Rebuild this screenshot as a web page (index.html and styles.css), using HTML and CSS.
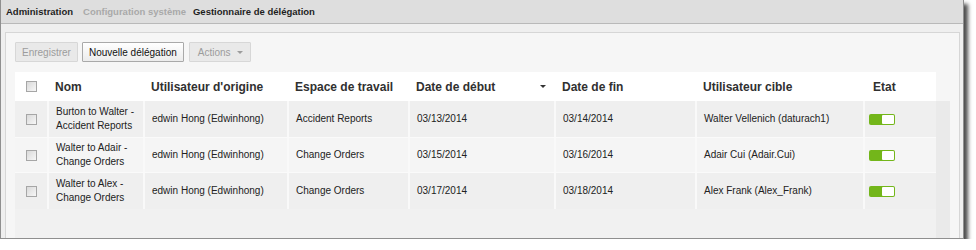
FILE: index.html
```html
<!DOCTYPE html>
<html lang="fr">
<head>
<meta charset="utf-8">
<title>Gestionnaire de délégation</title>
<link rel="stylesheet" href="styles.css">
</head>
<body>
<div class="frame">
  <div class="crumbs">
    <span class="crumb first">Administration</span>
    <span class="crumb muted">Configuration système</span>
    <span class="crumb">Gestionnaire de délégation</span>
  </div>
  <div class="main">
    <div class="panel">
      <div class="toolbar">
        <button class="btn disabled">Enregistrer</button>
        <button class="btn">Nouvelle délégation</button>
        <button class="btn disabled actions">Actions <span class="caret"></span></button>
      </div>
      <div class="tablewrap">
        <div class="table">
          <div class="row head">
            <div class="cell chk"><span class="cb"></span></div>
            <div class="cell">Nom</div>
            <div class="cell">Utilisateur d'origine</div>
            <div class="cell">Espace de travail</div>
            <div class="cell sorted">Date de début <span class="sort"></span></div>
            <div class="cell">Date de fin</div>
            <div class="cell">Utilisateur cible</div>
            <div class="cell etat">Etat</div>
          </div>
          <div class="body">
            <div class="row odd">
              <div class="cell chk"><span class="cb"></span></div>
              <div class="cell name">Burton to Walter - Accident Reports</div>
              <div class="cell">edwin Hong (Edwinhong)</div>
              <div class="cell">Accident Reports</div>
              <div class="cell">03/13/2014</div>
              <div class="cell">03/14/2014</div>
              <div class="cell">Walter Vellenich (daturach1)</div>
              <div class="cell"><span class="toggle"><span class="knob"></span></span></div>
            </div>
            <div class="row even">
              <div class="cell chk"><span class="cb"></span></div>
              <div class="cell name">Walter to Adair - Change Orders</div>
              <div class="cell">edwin Hong (Edwinhong)</div>
              <div class="cell">Change Orders</div>
              <div class="cell">03/15/2014</div>
              <div class="cell">03/16/2014</div>
              <div class="cell">Adair Cui (Adair.Cui)</div>
              <div class="cell"><span class="toggle"><span class="knob"></span></span></div>
            </div>
            <div class="row odd">
              <div class="cell chk"><span class="cb"></span></div>
              <div class="cell name">Walter to Alex - Change Orders</div>
              <div class="cell">edwin Hong (Edwinhong)</div>
              <div class="cell">Change Orders</div>
              <div class="cell">03/17/2014</div>
              <div class="cell">03/18/2014</div>
              <div class="cell">Alex Frank (Alex_Frank)</div>
              <div class="cell"><span class="toggle"><span class="knob"></span></span></div>
            </div>
          </div>
        </div>
        <div class="strip"></div>
      </div>
    </div>
  </div>
</div>
</body>
</html>
```
FILE: styles.css
```css
html, body {
  margin: 0;
  padding: 0;
  background: #ffffff;
}

body {
  font-family: "Liberation Sans", Arial, sans-serif;
  color: #222;
}

.frame {
  width: 964px;
  height: 239px;
  box-sizing: border-box;
  border: 1px solid #8f8f8f;
  border-top: 0;
  background: #efefef;
  box-shadow: 4px 4px 4px rgba(0, 0, 0, 0.7);
  display: flex;
  flex-direction: column;
}

.crumbs {
  height: 23px;
  border-bottom: 1px solid #b9b9b9;
  background: #dedede;
  display: flex;
  align-items: center;
  padding-left: 5px;
  font-size: 9.5px;
  font-weight: bold;
  color: #1e1e1e;
}

.crumb { margin-right: 7px; }
.crumb.first { margin-right: 10px; }
.crumb.muted { color: #a9a9a9; }

.main {
  flex: 1;
  display: flex;
  padding: 8px 3px 0 4px;
}

.panel {
  flex: 1;
  border: 1px solid #d6d6d6;
  border-bottom: 0;
  background: #f6f6f6;
  padding: 9px 0 0 9px;
  display: flex;
  flex-direction: column;
}

.toolbar {
  display: flex;
  gap: 4px;
  height: 20px;
  margin-bottom: 10px;
}

.btn {
  height: 20px;
  box-sizing: border-box;
  padding: 0 6px;
  border: 1px solid #a9a9a9;
  border-radius: 1px;
  background: linear-gradient(#ffffff, #ececec);
  font-family: "Liberation Sans", Arial, sans-serif;
  font-size: 10px;
  color: #111;
  display: flex;
  align-items: center;
}

.btn.disabled {
  border-color: #d7d7d7;
  background: #e9e9e9;
  color: #9c9c9c;
}

.btn.actions {
  margin-left: 1px;
  padding: 0 7px 0 8px;
}

.caret {
  display: inline-block;
  margin-left: 6px;
  border-left: 3px solid transparent;
  border-right: 3px solid transparent;
  border-top: 3px solid #9c9c9c;
}

.tablewrap {
  flex: 1;
  display: flex;
}

.table {
  width: 921px;
  display: flex;
  flex-direction: column;
}

.row {
  display: grid;
  grid-template-columns: 32px 96px 144px 121px 146px 141px 168px 73px;
}

.head {
  height: 29px;
  background: #ffffff;
  font-size: 12px;
  font-weight: bold;
  color: #303030;
}

.head .cell { border-left: 0; padding-left: 8px; }
.head .chk { padding-left: 11px; }
.head .etat { padding-left: 10px; }

.body {
  flex: 1;
  background: #f1f1f1;
}

.body .row {
  height: 36px;
  font-size: 10px;
  line-height: 14px;
  color: #222;
}

.row.odd { background: #efefef; }
.row.even {
  background: #f5f5f5;
  border-top: 1px solid #fafafa;
  border-bottom: 1px solid #fafafa;
  height: 34px;
}

.cell {
  display: flex;
  align-items: center;
  box-sizing: border-box;
  padding: 0 6px 0 7px;
  border-left: 2px solid #f9f9f9;
  min-width: 0;
}

.body .cell.chk { border-left: 0; }

.chk { padding-left: 11px; }

.sorted {
  justify-content: space-between;
}

.sort {
  display: inline-block;
  margin-right: 2px;
  border-left: 3px solid transparent;
  border-right: 3px solid transparent;
  border-top: 3px solid #333;
}

.cb {
  width: 11px;
  height: 11px;
  box-sizing: border-box;
  border: 1px solid #a6a6a6;
  background: linear-gradient(135deg, #d9d9d9, #f7f7f7);
}

.toggle {
  width: 26px;
  height: 11px;
  box-sizing: border-box;
  margin-left: -3px;
  border-radius: 2px;
  background: #73b61a;
  display: flex;
  justify-content: flex-end;
  padding: 1px;
}

.knob {
  width: 12px;
  height: 9px;
  border-radius: 1px;
  background: #ffffff;
}

.strip {
  width: 14px;
  margin-top: 29px;
  background: #eaeaea;
}
```
